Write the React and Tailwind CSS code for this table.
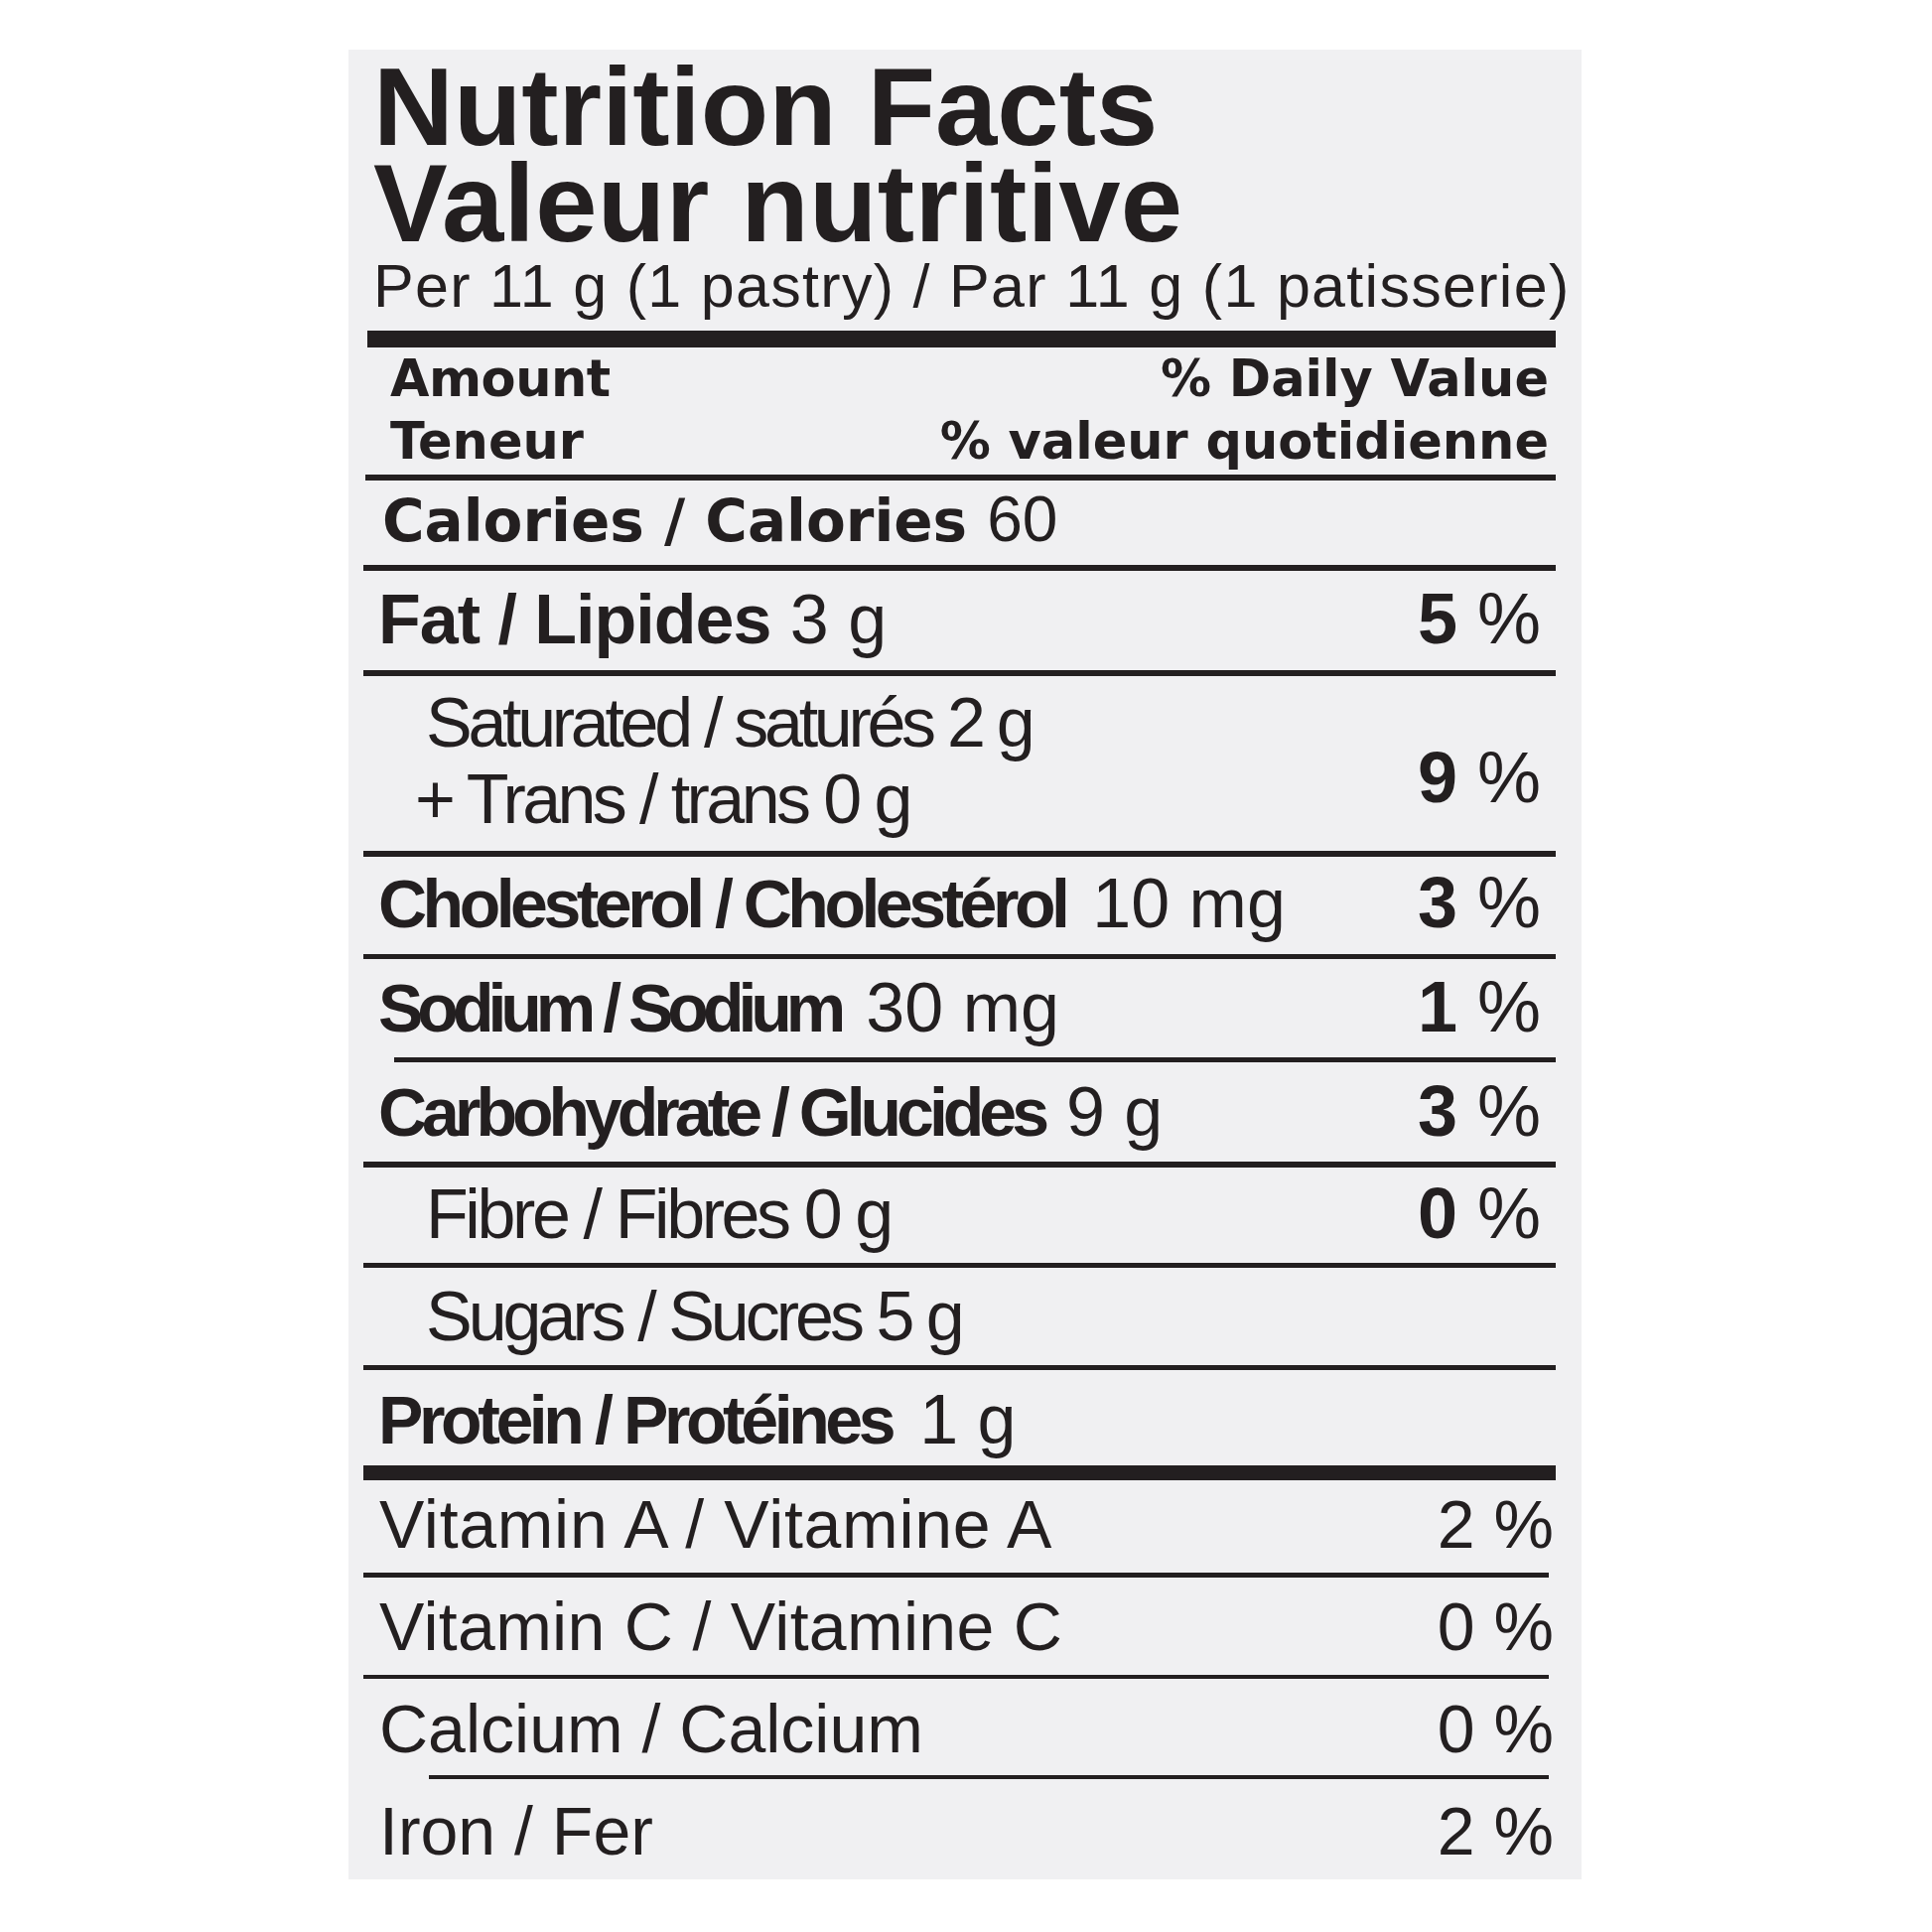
const sans = "font-['Liberation_Sans',Arial,sans-serif]";
const wide = "font-['DejaVu_Sans','Liberation_Sans',sans-serif]";

function Line({ className = "" }) {
  return <div className={`bg-[#231f20] ${className}`} />;
}

function Pct({ n, className = "" }) {
  return (
    <div className={`${sans} whitespace-nowrap text-[72px] leading-none pr-[15px] ${className}`}>
      <span className="font-bold">{n}</span> %
    </div>
  );
}

function VitRow({ label, pct, className, track = "" }) {
  return (
    <div className={`flex justify-between pl-[16px] pr-[2px] ${sans} text-[68px] leading-none whitespace-nowrap ${className}`}>
      <div className={track}>{label}</div>
      <div>{pct} %</div>
    </div>
  );
}

export default function App() {
  return (
    <div className="min-h-[1946px] w-[1946px] bg-white pt-[50px] pl-[351px]">
      <div className="w-[1242px] h-[1843px] bg-[#f0f0f2] pt-[9px] pl-[15px] pr-[26px] text-[#231f20]">
        <div className={`${sans} font-bold text-[112px] leading-[97px] pl-[10px] whitespace-nowrap`}>
          <div>Nutrition Facts</div>
          <div className="tracking-[0.4px]">Valeur nutritive</div>
        </div>
        <div className={`${sans} text-[61px] leading-none tracking-[1.3px] pl-[10px] mt-[5px] whitespace-nowrap`}>
          Per 11 g (1 pastry) / Par 11 g (1 patisserie)
        </div>
        <Line className="ml-[4px] mt-[14px] h-[17px]" />
        <div className={`${wide} font-bold text-[51px] leading-[63px] pl-[27px] pr-[7px] whitespace-nowrap`}>
          <div className="flex justify-between">
            <span className="tracking-[-0.5px]">Amount</span>
            <span>% Daily Value</span>
          </div>
          <div className="flex justify-between">
            <span>Teneur</span>
            <span>% valeur quotidienne</span>
          </div>
        </div>
        <Line className="ml-[2px] mt-[2px] h-[6px]" />

        {/* calories */}
        <div className="h-[85px] pt-[7px] pl-[19px] flex items-baseline gap-[20px] whitespace-nowrap">
          <span className={`${wide} font-bold text-[58px] leading-none`}>Calories / Calories</span>
          <span className={`${sans} text-[64px] leading-none`}>60</span>
        </div>
        <Line className="h-[6px]" />

        <div className="h-[100px] pt-[12px] flex justify-between items-baseline">
          <div className={`${sans} text-[70px] leading-none pl-[15px] whitespace-nowrap`}>
            <span className="font-bold tracking-[-1px]">Fat / Lipides</span> 3 g
          </div>
          <Pct n="5" />
        </div>
        <Line className="h-[6px]" />

        <div className="h-[176px] flex justify-between">
          <div className={`${sans} text-[70px] leading-[77px] pt-[9px] whitespace-nowrap`}>
            <div className="pl-[63px] tracking-[-4.3px]">Saturated / saturés 2 g</div>
            <div className="pl-[52px] tracking-[-3.6px]">+ Trans / trans 0 g</div>
          </div>
          <Pct n="9" className="pt-[66px]" />
        </div>
        <Line className="h-[6px]" />

        <div className="h-[98px] pt-[10px] flex justify-between items-baseline">
          <div className={`${sans} text-[68px] leading-none pl-[15px] whitespace-nowrap`}>
            <span className="font-bold tracking-[-4.5px]">Cholesterol / Cholestérol</span>
            <span className="ml-[27px] text-[70px]">10 mg</span>
          </div>
          <Pct n="3" />
        </div>
        <Line className="h-[5px]" />

        <div className="h-[99px] pt-[12px] flex justify-between items-baseline">
          <div className={`${sans} text-[68px] leading-none pl-[15px] whitespace-nowrap`}>
            <span className="font-bold tracking-[-6px]">Sodium / Sodium</span>
            <span className="ml-[26px] text-[70px]">30 mg</span>
          </div>
          <Pct n="1" />
        </div>
        <Line className="ml-[31px] h-[5px]" />

        <div className="h-[100px] pt-[13px] flex justify-between items-baseline">
          <div className={`${sans} text-[68px] leading-none pl-[15px] whitespace-nowrap`}>
            <span className="font-bold tracking-[-5px]">Carbohydrate / Glucides</span>
            <span className="ml-[22px] text-[70px]">9 g</span>
          </div>
          <Pct n="3" />
        </div>
        <Line className="h-[6px]" />

        <div className="h-[96px] pt-[10px] flex justify-between items-baseline">
          <div className={`${sans} text-[70px] leading-none tracking-[-3.4px] pl-[63px] whitespace-nowrap`}>
            Fibre / Fibres 0 g
          </div>
          <Pct n="0" />
        </div>
        <Line className="h-[5px]" />

        <div className="h-[98px] pt-[14px]">
          <div className={`${sans} text-[70px] leading-none tracking-[-4px] pl-[63px] whitespace-nowrap`}>
            Sugars / Sucres 5 g
          </div>
        </div>
        <Line className="h-[5px]" />

        <div className="h-[96px] pt-[15px]">
          <div className={`${sans} text-[68px] leading-none pl-[15px] whitespace-nowrap`}>
            <span className="font-bold tracking-[-4.4px]">Protein / Protéines</span>
            <span className="ml-[28px] text-[70px]">1 g</span>
          </div>
        </div>
        <Line className="h-[15px]" />

        <VitRow label="Vitamin A / Vitamine A" pct="2" track="tracking-[0.7px]" className="h-[93px] pt-[10px]" />
        <Line className="mr-[7px] h-[5px]" />
        <VitRow label="Vitamin C / Vitamine C" pct="0" track="tracking-[0.3px]" className="h-[98px] pt-[15px]" />
        <Line className="mr-[7px] h-[4px]" />
        <VitRow label="Calcium / Calcium" pct="0" className="h-[97px] pt-[16px]" />
        <Line className="ml-[66px] mr-[7px] h-[4px]" />
        <VitRow label="Iron / Fer" pct="2" className="h-[101px] pt-[18px]" />
      </div>
    </div>
  );
}
